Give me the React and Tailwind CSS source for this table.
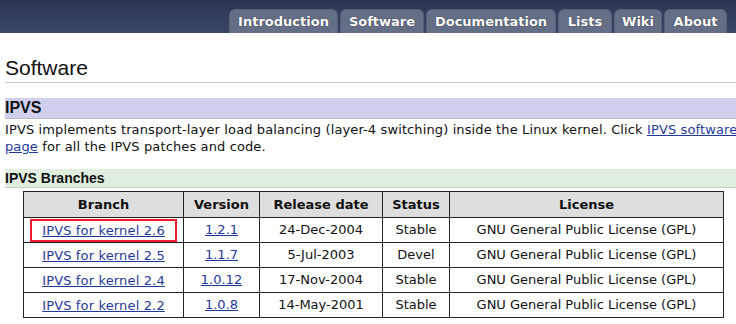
const tabs = [
  { label: "Introduction", w: "w-[109px]" },
  { label: "Software", w: "w-[84px]" },
  { label: "Documentation", w: "w-[130px]" },
  { label: "Lists", w: "w-[54px]" },
  { label: "Wiki", w: "w-[48px]" },
  { label: "About", w: "w-[63px]" },
];

const branches = [
  { branch: "IPVS for kernel 2.6", version: "1.2.1", date: "24-Dec-2004", status: "Stable", marked: true },
  { branch: "IPVS for kernel 2.5", version: "1.1.7", date: "5-Jul-2003", status: "Devel" },
  { branch: "IPVS for kernel 2.4", version: "1.0.12", date: "17-Nov-2004", status: "Stable" },
  { branch: "IPVS for kernel 2.2", version: "1.0.8", date: "14-May-2001", status: "Stable" },
];

const verdana = "font-['Verdana','DejaVu_Sans',sans-serif]";
const arial = "font-['Liberation_Sans',Arial,sans-serif]";
const link = "text-[#1f3a9c] underline";
const cell = "border border-[#222] h-[25px] text-center p-0";

export default function App() {
  return (
    <div className={`w-[736px] h-[324px] overflow-hidden bg-white text-[#111] ${verdana}`}>
      {/* top navigation */}
      <div className="h-[33px] bg-gradient-to-b from-[#2b3550] to-[#3c4769] flex items-end justify-end pr-[9px] gap-[2px]">
        {tabs.map((t) => (
          <div
            key={t.label}
            className={`${t.w} h-[24px] rounded-t-[6px] bg-[#646e85] border border-b-0 border-[#55607a] text-white font-bold text-[13px] leading-[24px] text-center [text-shadow:0_0_1px_#223]`}
          >
            {t.label}
          </div>
        ))}
      </div>

      <div className="pl-[5px] w-[760px]">
        <h1 className={`${arial} text-[21px] leading-[24px] mt-[23px] pb-[2px] border-b border-[#c8c8c8]`}>
          Software
        </h1>

        <h2 className={`${arial} font-bold text-[16px] leading-[20px] mt-[15px] bg-[#d0d0ee] border-b border-[#bbbbcc] h-[21px]`}>
          IPVS
        </h2>

        <p className="text-[13px] leading-[17px] mt-[2px] whitespace-nowrap tracking-[0.12px]">
          IPVS implements transport-layer load balancing (layer-4 switching) inside the Linux kernel. Click{" "}
          <a className={link}>IPVS software</a>
          <br />
          <a className={link}>page</a> for all the IPVS patches and code.
        </p>

        <h3 className={`${arial} font-bold text-[14px] leading-[18px] mt-[14px] bg-[#dfeedf] border-b border-[#c4d0c4] h-[19px] w-[731px]`}>
          IPVS Branches
        </h3>

        <table className="ml-[18px] mt-[3px] w-[700px] border-collapse text-[13px] table-fixed">
          <colgroup>
            <col className="w-[160px]" />
            <col className="w-[76px]" />
            <col className="w-[123px]" />
            <col className="w-[67px]" />
            <col className="w-[274px]" />
          </colgroup>
          <thead>
            <tr className="bg-[#dedede] font-bold">
              <th className={`${cell} h-[26px]`}>Branch</th>
              <th className={cell}>Version</th>
              <th className={cell}>Release date</th>
              <th className={cell}>Status</th>
              <th className={cell}>License</th>
            </tr>
          </thead>
          <tbody>
            {branches.map((b) => (
              <tr key={b.branch}>
                <td className={cell}>
                  <span
                    className={`inline-block px-[10px] leading-[19px] tracking-[0.15px] ${
                      b.marked ? "border-2 border-[#ee1c2c]" : "border-2 border-transparent"
                    }`}
                  >
                    <a className={link}>{b.branch}</a>
                  </span>
                </td>
                <td className={cell}>
                  <a className={link}>{b.version}</a>
                </td>
                <td className={cell}>{b.date}</td>
                <td className={cell}>{b.status}</td>
                <td className={cell}>GNU General Public License (GPL)</td>
              </tr>
            ))}
          </tbody>
        </table>
      </div>
    </div>
  );
}
